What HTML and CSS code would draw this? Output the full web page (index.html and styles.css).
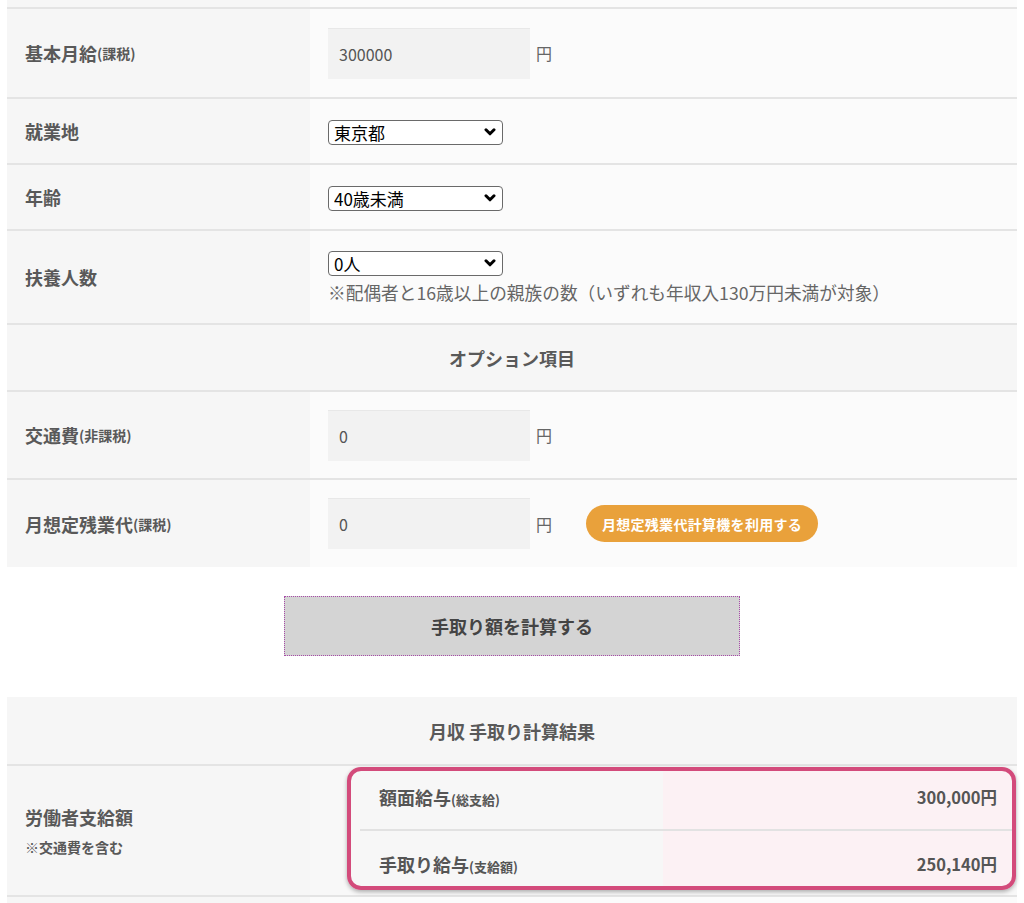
FILE: index.html
```html
<!DOCTYPE html>
<html lang="ja">
<head>
<meta charset="utf-8">
<title>月収 手取り計算</title>
<link rel="stylesheet" href="styles.css">
</head>
<body>
<div class="page">
  <div class="form">
    <div class="row row-cut"><div class="lab"></div><div class="val"></div></div>
    <div class="row r1">
      <div class="lab">基本月給<small>(課税)</small></div>
      <div class="val"><input class="num" type="text" value="300000"><span class="yen">円</span></div>
    </div>
    <div class="row r2">
      <div class="lab">就業地</div>
      <div class="val">
        <div class="sel"><select><option>東京都</option></select><svg class="chev" viewBox="0 0 12 8" width="12" height="8"><path d="M2 1.8 L6 5.8 L10 1.8" fill="none" stroke="#000" stroke-width="3" stroke-linecap="round" stroke-linejoin="round"/></svg></div>
      </div>
    </div>
    <div class="row r3">
      <div class="lab">年齢</div>
      <div class="val">
        <div class="sel"><select><option>40歳未満</option></select><svg class="chev" viewBox="0 0 12 8" width="12" height="8"><path d="M2 1.8 L6 5.8 L10 1.8" fill="none" stroke="#000" stroke-width="3" stroke-linecap="round" stroke-linejoin="round"/></svg></div>
      </div>
    </div>
    <div class="row r4">
      <div class="lab">扶養人数</div>
      <div class="val col">
        <div class="sel"><select><option>0人</option></select><svg class="chev" viewBox="0 0 12 8" width="12" height="8"><path d="M2 1.8 L6 5.8 L10 1.8" fill="none" stroke="#000" stroke-width="3" stroke-linecap="round" stroke-linejoin="round"/></svg></div>
        <p class="note">※配偶者と16歳以上の親族の数（いずれも年収入130万円未満が対象）</p>
      </div>
    </div>
    <div class="row r5 head">オプション項目</div>
    <div class="row r6">
      <div class="lab">交通費<small>(非課税)</small></div>
      <div class="val"><input class="num" type="text" value="0"><span class="yen">円</span></div>
    </div>
    <div class="row r7">
      <div class="lab">月想定残業代<small>(課税)</small></div>
      <div class="val"><input class="num" type="text" value="0"><span class="yen">円</span><a class="orange">月想定残業代計算機を利用する</a></div>
    </div>
  </div>

  <div class="calc-wrap"><button class="calc">手取り額を計算する</button></div>

  <div class="result">
    <div class="rhead">月収 手取り計算結果</div>
    <div class="row rrow">
      <div class="lab rlab">
        <span class="big">労働者支給額</span>
        <span class="sub">※交通費を含む</span>
      </div>
      <div class="val rval">
        <div class="box">
          <div class="irow i1">
            <div class="ilab">額面給与<small>(総支給)</small></div>
            <div class="ival">300,000円</div>
          </div>
          <div class="irow i2">
            <div class="ilab">手取り給与<small>(支給額)</small></div>
            <div class="ival">250,140円</div>
          </div>
        </div>
      </div>
    </div>
    <div class="row row-end"><div class="lab"></div><div class="val"></div></div>
  </div>
</div>
</body>
</html>
```

FILE: styles.css
```css
* { box-sizing: border-box; }
html, body { margin: 0; padding: 0; background: #fff; }
body {
  font-family: "Noto Sans CJK JP", "Noto Sans", sans-serif;
  color: #595959;
  font-size: 18px;
  overflow: hidden;
}
.page { padding: 0 7px; }

.row {
  display: grid;
  grid-template-columns: 303px 1fr;
  border-top: 2px solid #e4e4e4;
}
.row-cut { border-top: none; height: 7px; }
.lab {
  background: #f6f6f6;
  display: flex;
  align-items: center;
  padding-left: 18px;
  font-weight: 700;
  font-size: 18px;
  line-height: 26px;
  color: #595959;
}
.lab small { font-size: 14px; font-weight: 700; }
.val {
  background: #fbfbfb;
  display: flex;
  align-items: center;
  padding-left: 18px;
}
.val.col { flex-direction: column; align-items: flex-start; justify-content: center; }

.r1 { height: 90px; }
.r2 { height: 66px; }
.r3 { height: 66px; }
.r4 { height: 94px; }
.r5 { height: 67px; }
.r6 { height: 88px; }
.r7 { height: 89px; }

.num {
  width: 202px;
  height: 51px;
  border: none;
  border-top: 1px solid #e8e8e8;
  background: #f2f2f2;
  padding: 0 11px;
  font-family: "Noto Sans CJK JP", sans-serif;
  font-size: 16px;
  color: #555;
  outline: none;
  margin: 0;
}
.yen { font-size: 16px; color: #666; margin-left: 6px; }

.sel { position: relative; width: 175px; height: 25px; }
.sel select {
  -webkit-appearance: none;
  appearance: none;
  width: 175px;
  height: 25px;
  border: 1px solid #6a6a6a;
  border-radius: 4px;
  background: #fff;
  color: #000;
  font-family: "Noto Sans CJK JP", sans-serif;
  font-size: 17px;
  line-height: 23px;
  padding: 0 0 0 5px;
  margin: 0;
}
.chev { position: absolute; right: 7px; top: 9px; pointer-events: none; }
.note {
  margin: 4px 0 0;
  font-size: 17.7px;
  line-height: 26px;
  color: #666;
}

.head {
  display: flex;
  align-items: center;
  justify-content: center;
  background: #f6f6f6;
  font-weight: 700;
  font-size: 18px;
  color: #595959;
}

.orange {
  margin-left: 34px;
  display: inline-flex;
  align-items: center;
  justify-content: center;
  width: 232px;
  height: 37px;
  border-radius: 19px;
  background: #e9a13b;
  color: #fff;
  font-weight: 700;
  font-size: 14px;
  letter-spacing: 0.3px;
}

.calc-wrap { display: flex; justify-content: center; padding: 29px 0 41px; }
.calc {
  width: 456px;
  height: 60px;
  background: #d4d4d4;
  border: 1px dotted #a84aa8;
  font-family: "Noto Sans CJK JP", sans-serif;
  font-weight: 700;
  font-size: 18px;
  color: #444;
  padding: 0;
}

.rhead {
  height: 67px;
  background: #f6f6f6;
  display: flex;
  align-items: center;
  justify-content: center;
  font-size: 18px;
  font-weight: 700;
  color: #595959;
}
.rrow { height: 131px; }
.rlab { flex-direction: column; align-items: flex-start; justify-content: center; background: #f6f6f6; }
.rlab .big { font-size: 18px; line-height: 26px; }
.rlab .sub { font-size: 14px; line-height: 20px; margin-top: 7px; }
.rval { background: #f8f8f8; padding: 1px 1px 5px 37px; align-items: stretch; }
.box {
  flex: 1;
  border: 4px solid #d34b7b;
  border-radius: 14px;
  background: linear-gradient(to right, #f7f7f7 0, #f7f7f7 312px, #fcf1f4 312px);
  box-shadow: 0 2px 4px rgba(0,0,0,0.3);
  padding-left: 9px;
  overflow: hidden;
}
.irow {
  display: flex;
  justify-content: space-between;
  font-weight: 700;
  line-height: 26px;
  color: #555;
}
.i1 { height: 58px; padding-top: 13px; }
.i2 { height: 55px; padding-top: 20px; border-top: 2px solid #e2e2e2; }
.ilab { padding-left: 19px; font-size: 18px; }
.ilab small { font-size: 13px; }
.ival { padding-right: 15px; font-size: 16.5px; }
.row-end { height: 10px; }
```
